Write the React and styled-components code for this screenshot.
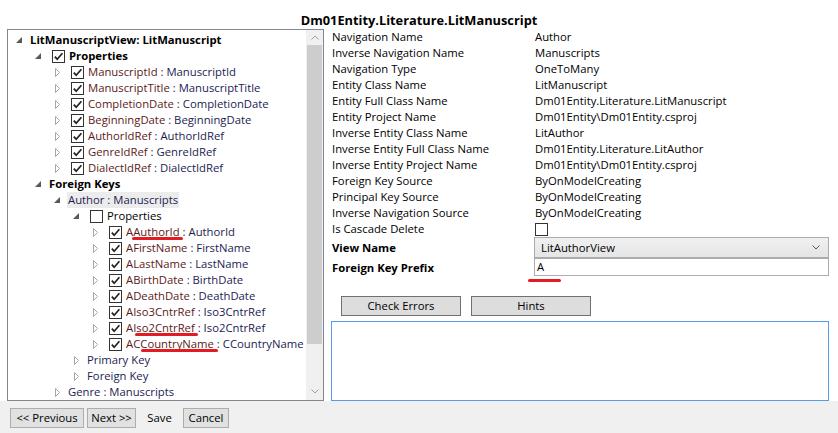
import React from 'react';
import styled, { createGlobalStyle } from 'styled-components';

const GlobalStyle = createGlobalStyle`
  html, body { margin: 0; padding: 0; background: #ffffff; }
  body {
    font-family: "Open Sans", "Noto Sans", sans-serif;
    font-size: 11.3px;
    color: #000000;
  }
  * { box-sizing: border-box; }
`;

const Window = styled.div`
  width: 838px;
  height: 433px;
  display: flex;
  flex-direction: column;
  background: #ffffff;
  overflow: hidden;
`;

const Title = styled.div`
  height: 29px;
  padding-top: 11px;
  text-align: center;
  font-weight: 700;
  font-size: 12.8px;
  line-height: 18px;
  color: #000;
`;

const Main = styled.div`
  display: flex;
  height: 372px;
`;

const TreePanel = styled.div`
  margin-left: 7px;
  width: 317px;
  height: 372px;
  border: 1px solid #828790;
  display: flex;
  background: #fff;
`;

const TreeList = styled.div`
  flex: 1;
  overflow: hidden;
  padding-top: 2px;
`;

const Scrollbar = styled.div`
  width: 17px;
  background: #f0f0f0;
  display: flex;
  flex-direction: column;
`;

const ScrollArrow = styled.div`
  height: ${p => p.$h}px;
  display: flex;
  align-items: center;
  justify-content: center;
`;

const Thumb = styled.div`
  height: ${p => p.$h}px;
  margin: 0 1px;
  background: #cdcdcd;
`;

const Track = styled.div`
  flex: 1;
`;

const Row = styled.div`
  height: 16px;
  display: flex;
  align-items: center;
  white-space: nowrap;
  padding-left: ${p => 5 + p.$level * 19}px;
`;

const Expander = styled.span`
  width: 16px;
  height: 16px;
  flex: none;
  display: flex;
  align-items: center;
  padding-left: ${p => (p.$open ? 3 : 4)}px;
`;

const Box = styled.span`
  width: 13px;
  height: 13px;
  flex: none;
  border: 1px solid #333333;
  background: #fff;
  display: flex;
  align-items: center;
  justify-content: center;
  margin-left: ${p => p.$ml || 0}px;
  margin-right: ${p => p.$mr || 0}px;
`;

const Label = styled.span`
  line-height: 16px;
  padding: 0 1px;
  font-weight: ${p => (p.$bold ? 700 : 400)};
  background: ${p => (p.$highlight ? '#ececec' : 'transparent')};
  color: ${p => p.$color || '#000'};
`;

const NamePart = styled.span`
  color: #5c1a1a;
`;

const TypePart = styled.span`
  color: #1c1c52;
`;

const Mark = styled.span`
  position: relative;
  &::after {
    content: '';
    position: absolute;
    left: ${p => p.$dl}px;
    right: ${p => -p.$dr}px;
    top: 13px;
    height: 3px;
    border-radius: 2px;
    background: #e41b23;
  }
`;

const Details = styled.div`
  margin-left: 7px;
  width: 498px;
  display: flex;
  flex-direction: column;
`;

const PropGrid = styled.div`
  display: grid;
  grid-template-columns: 203px 1fr;
  grid-auto-rows: 16px;
  line-height: 16px;
`;

const PropLabel = styled.div`
  padding-left: 1px;
  white-space: nowrap;
`;

const PropValue = styled.div`
  padding-left: 1px;
  white-space: nowrap;
  display: flex;
  align-items: center;
`;

const EditRow = styled.div`
  display: grid;
  grid-template-columns: 203px 1fr;
  height: ${p => p.$h}px;
  align-items: center;
`;

const BoldLabel = styled.div`
  padding-left: 1px;
  font-weight: 700;
`;

const Combo = styled.div`
  height: 21px;
  border: 1px solid #acacac;
  background: linear-gradient(#f0f0f0, #e5e5e5);
  display: flex;
  align-items: center;
  justify-content: space-between;
  padding: 0 8px 0 6px;
`;

const TextBoxWrap = styled.div`
  position: relative;
  height: 18px;
  &::after {
    content: '';
    position: absolute;
    left: -6px;
    width: 33px;
    top: 21px;
    height: 3px;
    border-radius: 2px;
    background: #e41b23;
  }
`;

const TextBox = styled.div`
  height: 18px;
  border: 1px solid #abadb3;
  background: #fff;
  padding-left: 2px;
  line-height: 16px;
`;

const ButtonRow = styled.div`
  margin-top: 20px;
  padding-left: 10px;
  display: flex;
  gap: 10px;
`;

const ActionButton = styled.button`
  width: 120px;
  height: 20px;
  border: 1px solid #707070;
  background: #dddddd;
  font: inherit;
  color: #000;
  padding: 0;
  line-height: 16px;
`;

const Output = styled.div`
  margin-top: 5px;
  height: 80px;
  border: 1px solid #569de5;
  background: #fff;
`;

const BottomBar = styled.div`
  flex: 1;
  background: #f0f0f0;
  display: flex;
  align-items: flex-start;
  gap: 3px;
  padding: 7px 0 0 10px;
`;

const NavButton = styled.button`
  width: ${p => p.$w}px;
  height: 20px;
  border: 1px solid ${p => (p.$flat ? 'transparent' : '#adadad')};
  background: ${p => (p.$flat ? 'transparent' : '#e1e1e1')};
  font: inherit;
  color: #000;
  padding: 0;
  line-height: 16px;
`;

const OpenTri = () => (
  <svg width="6" height="6" viewBox="0 0 6 6">
    <path d="M6 0 L6 6 L0 6 Z" fill="#595959" />
  </svg>
);

const ClosedTri = () => (
  <svg width="5" height="9" viewBox="0 0 5 9">
    <path d="M0.5 0.5 L4.5 4.5 L0.5 8.5 Z" fill="none" stroke="#a6a6a6" strokeWidth="1" />
  </svg>
);

const CheckMark = () => (
  <svg width="11" height="11" viewBox="0 0 11 11">
    <path d="M1.8 5.6 L4.2 8.2 L9.4 2.2" fill="none" stroke="#222" strokeWidth="1.7" />
  </svg>
);

const Chevron = ({ up, color = '#a0a0a0' }) => (
  <svg width="8" height="5" viewBox="0 0 8 5">
    <path d={up ? 'M0.5 4.5 L4 1 L7.5 4.5' : 'M0.5 0.5 L4 4 L7.5 0.5'} fill="none" stroke={color} strokeWidth="1" />
  </svg>
);

const tree = [
  { level: 0, exp: 'open', bold: true, text: 'LitManuscriptView: LitManuscript' },
  { level: 1, exp: 'open', check: true, bold: true, text: 'Properties' },
  { level: 2, exp: 'closed', check: true, name: 'ManuscriptId', type: 'ManuscriptId' },
  { level: 2, exp: 'closed', check: true, name: 'ManuscriptTitle', type: 'ManuscriptTitle' },
  { level: 2, exp: 'closed', check: true, name: 'CompletionDate', type: 'CompletionDate' },
  { level: 2, exp: 'closed', check: true, name: 'BeginningDate', type: 'BeginningDate' },
  { level: 2, exp: 'closed', check: true, name: 'AuthorIdRef', type: 'AuthorIdRef' },
  { level: 2, exp: 'closed', check: true, name: 'GenreIdRef', type: 'GenreIdRef' },
  { level: 2, exp: 'closed', check: true, name: 'DialectIdRef', type: 'DialectIdRef' },
  { level: 1, exp: 'open', bold: true, text: 'Foreign Keys' },
  { level: 2, exp: 'open', highlight: true, text: 'Author : Manuscripts', color: '#1c1c52' },
  { level: 3, exp: 'open', check: false, text: 'Properties' },
  { level: 4, exp: 'closed', check: true, pre: 'A', mark: 'AuthorId', dl: -1, dr: 3, type: 'AuthorId' },
  { level: 4, exp: 'closed', check: true, name: 'AFirstName', type: 'FirstName' },
  { level: 4, exp: 'closed', check: true, name: 'ALastName', type: 'LastName' },
  { level: 4, exp: 'closed', check: true, name: 'ABirthDate', type: 'BirthDate' },
  { level: 4, exp: 'closed', check: true, name: 'ADeathDate', type: 'DeathDate' },
  { level: 4, exp: 'closed', check: true, name: 'AIso3CntrRef', type: 'Iso3CntrRef' },
  { level: 4, exp: 'closed', check: true, pre: 'A', mark: 'Iso2CntrRef', dl: 2, dr: 3, type: 'Iso2CntrRef' },
  { level: 4, exp: 'closed', check: true, pre: 'AC', mark: 'CountryName', dl: 1, dr: 4, type: 'CCountryName' },
  { level: 3, exp: 'closed', text: 'Primary Key', color: '#1c1c52' },
  { level: 3, exp: 'closed', text: 'Foreign Key', color: '#1c1c52' },
  { level: 2, exp: 'closed', text: 'Genre : Manuscripts', color: '#1c1c52' },
];

const props = [
  ['Navigation Name', 'Author'],
  ['Inverse Navigation Name', 'Manuscripts'],
  ['Navigation Type', 'OneToMany'],
  ['Entity Class Name', 'LitManuscript'],
  ['Entity Full Class Name', 'Dm01Entity.Literature.LitManuscript'],
  ['Entity Project Name', 'Dm01Entity\\Dm01Entity.csproj'],
  ['Inverse Entity Class Name', 'LitAuthor'],
  ['Inverse Entity Full Class Name', 'Dm01Entity.Literature.LitAuthor'],
  ['Inverse Entity Project Name', 'Dm01Entity\\Dm01Entity.csproj'],
  ['Foreign Key Source', 'ByOnModelCreating'],
  ['Principal Key Source', 'ByOnModelCreating'],
  ['Inverse Navigation Source', 'ByOnModelCreating'],
];

function TreeRow({ item }) {
  const hasCheck = item.check !== undefined;
  return (
    <Row $level={item.level}>
      <Expander $open={item.exp === 'open'}>
        {item.exp === 'open' ? <OpenTri /> : <ClosedTri />}
      </Expander>
      {hasCheck && (
        <Box $ml={4} $mr={3}>
          {item.check && <CheckMark />}
        </Box>
      )}
      {item.text ? (
        <Label $bold={item.bold} $highlight={item.highlight} $color={item.color}>
          {item.text}
        </Label>
      ) : (
        <Label>
          <NamePart>
            {item.pre ? (
              <>
                {item.pre}
                <Mark $dl={item.dl} $dr={item.dr}>{item.mark}</Mark>
              </>
            ) : (
              item.name
            )}
          </NamePart>
          <TypePart> : {item.type}</TypePart>
        </Label>
      )}
    </Row>
  );
}

export default function App() {
  return (
    <>
      <GlobalStyle />
      <Window>
        <Title>Dm01Entity.Literature.LitManuscript</Title>
        <Main>
          <TreePanel>
            <TreeList>
              {tree.map((item, i) => (
                <TreeRow key={i} item={item} />
              ))}
            </TreeList>
            <Scrollbar>
              <ScrollArrow $h={15}>
                <Chevron up />
              </ScrollArrow>
              <Thumb $h={299} />
              <Track />
              <ScrollArrow $h={17}>
                <Chevron />
              </ScrollArrow>
            </Scrollbar>
          </TreePanel>
          <Details>
            <PropGrid>
              {props.map(([k, v]) => (
                <React.Fragment key={k}>
                  <PropLabel>{k}</PropLabel>
                  <PropValue>{v}</PropValue>
                </React.Fragment>
              ))}
              <PropLabel>Is Cascade Delete</PropLabel>
              <PropValue>
                <Box />
              </PropValue>
            </PropGrid>
            <EditRow $h={21}>
              <BoldLabel>View Name</BoldLabel>
              <Combo>
                <span>LitAuthorView</span>
                <Chevron color="#555" />
              </Combo>
            </EditRow>
            <EditRow $h={18}>
              <BoldLabel>Foreign Key Prefix</BoldLabel>
              <TextBoxWrap>
                <TextBox>A</TextBox>
              </TextBoxWrap>
            </EditRow>
            <ButtonRow>
              <ActionButton>Check Errors</ActionButton>
              <ActionButton>Hints</ActionButton>
            </ButtonRow>
            <Output />
          </Details>
        </Main>
        <BottomBar>
          <NavButton $w={74}>&lt;&lt; Previous</NavButton>
          <NavButton $w={49}>Next &gt;&gt;</NavButton>
          <NavButton $w={41} $flat>Save</NavButton>
          <NavButton $w={46}>Cancel</NavButton>
        </BottomBar>
      </Window>
    </>
  );
}
